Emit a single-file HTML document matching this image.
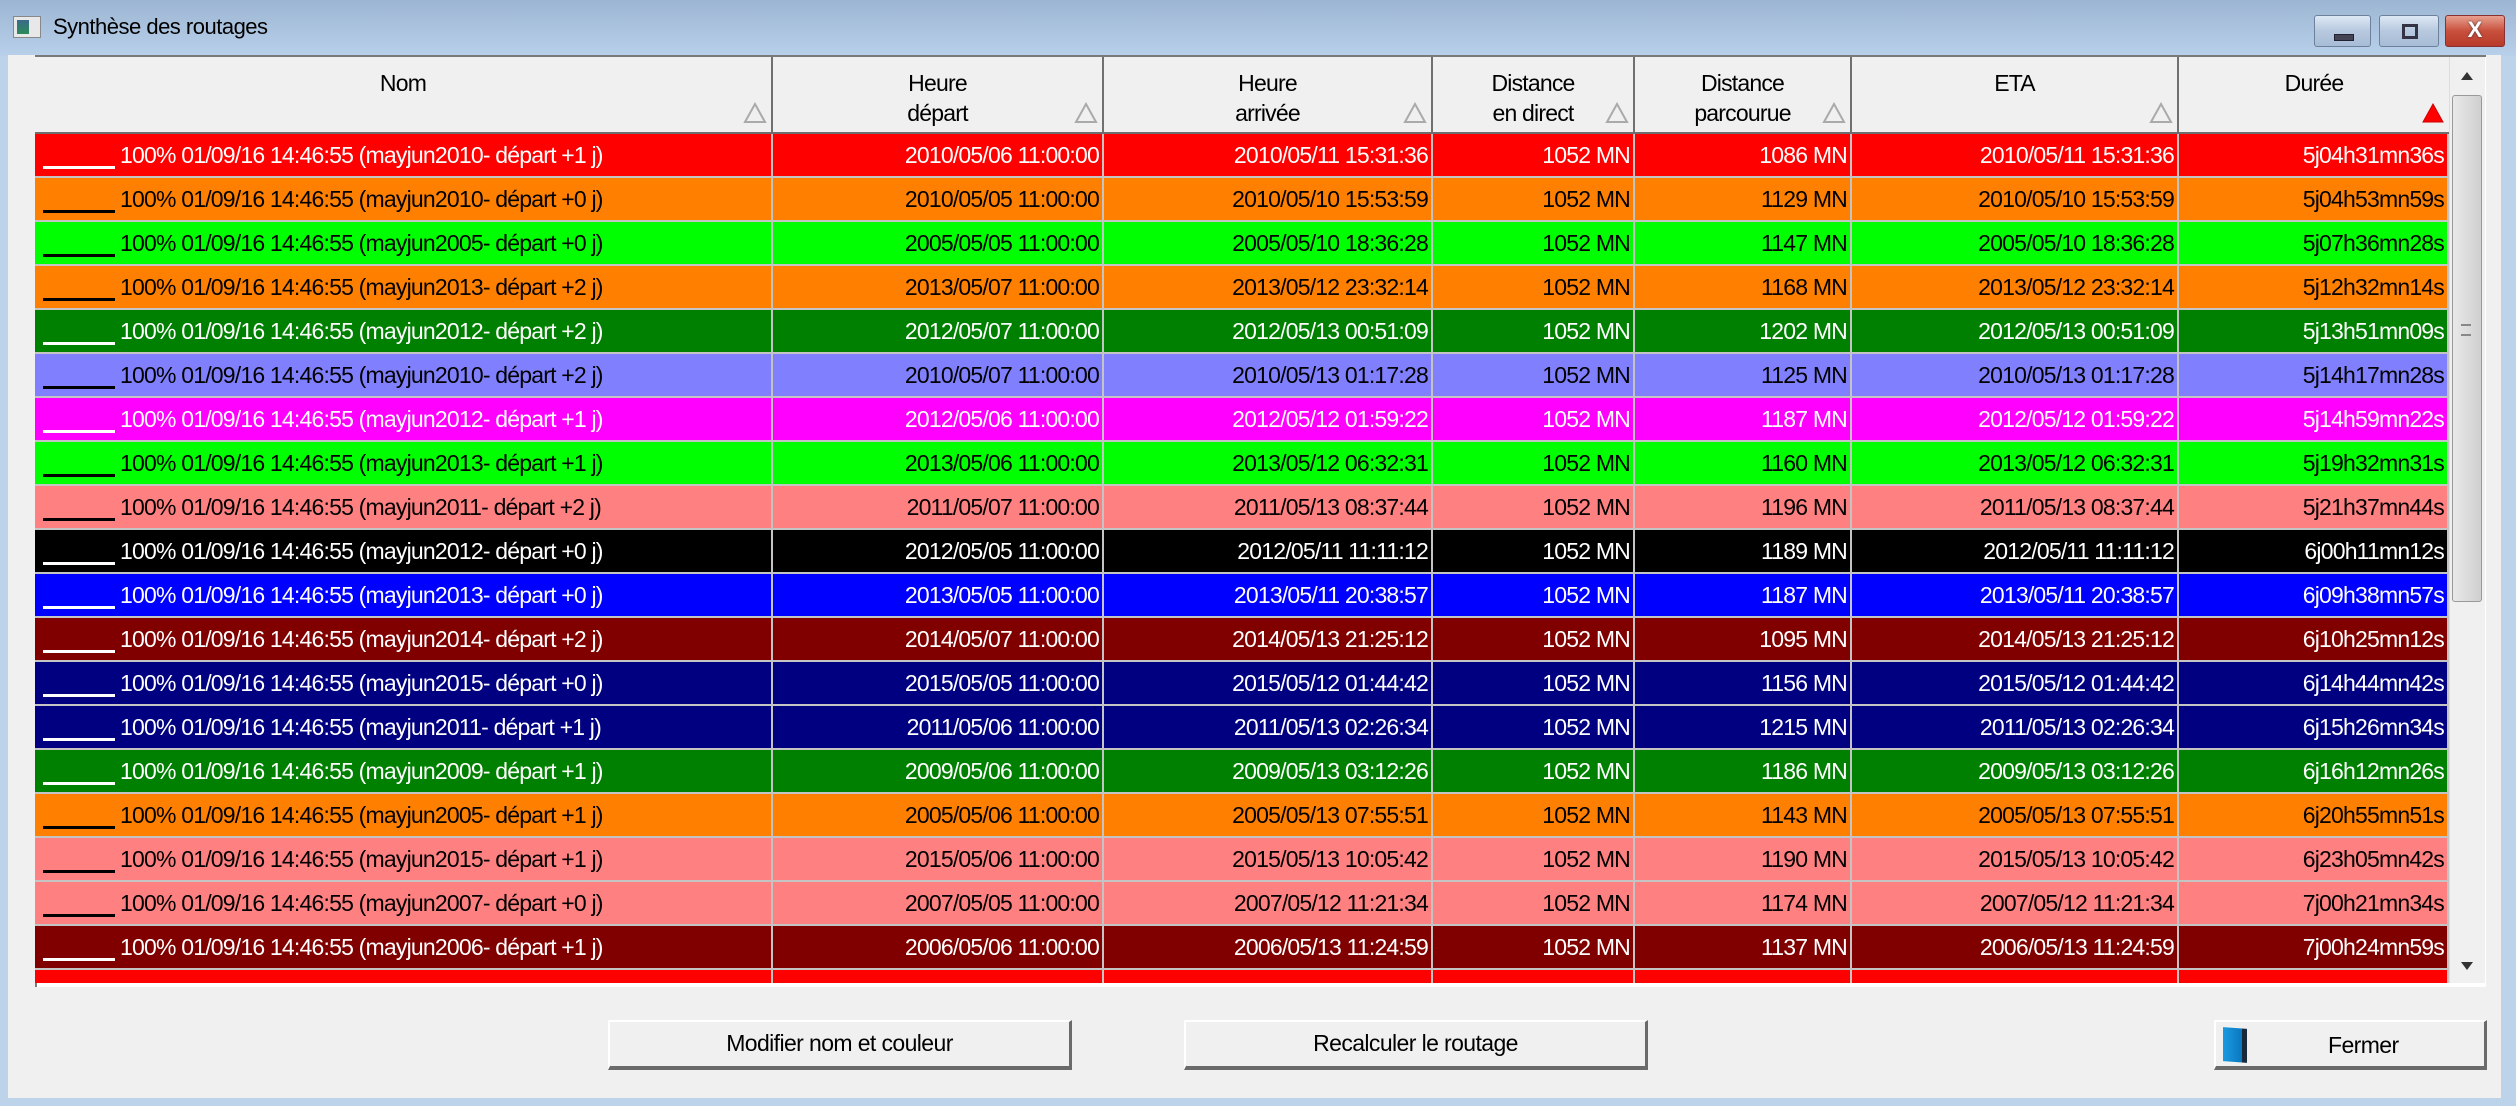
<!DOCTYPE html>
<html><head><meta charset="utf-8"><style>
*{margin:0;padding:0;box-sizing:border-box}
body{width:2516px;height:1106px;overflow:hidden;background:#bcd3ea;font-family:"Liberation Sans",Arial,sans-serif;position:relative}
.titlebar{position:absolute;left:0;top:0;width:2516px;height:56px;background:linear-gradient(#9cb5d2,#b8d0ea)}
.title{position:absolute;left:53px;top:14px;font-size:22px;color:#000;letter-spacing:-0.5px}
.ticon{position:absolute;left:13px;top:16px;width:28px;height:22px;background:#e8e8e8;border:1px solid #888}
.ticon:before{content:"";position:absolute;left:3px;top:3px;width:12px;height:14px;background:linear-gradient(#3a6b8a,#2c8a5a)}
.tb{position:absolute;top:15px;height:32px;border:1px solid #6d819c;border-radius:3px;background:linear-gradient(#dde8f4,#b7c9df 50%,#a7bcd6)}
.client{position:absolute;left:8px;top:55px;width:2493px;height:1043px;background:#f0f0f0}
.table{position:absolute;left:35px;top:55px;width:2451px;height:932px;background:#fff;border-top:2px solid #7a7a7a;border-left:2px solid #7a7a7a}
.hdr{position:absolute;left:35px;top:57px;height:77px;display:grid;grid-template-columns:738px 331px 329px 202px 217px 327px 270px;border-bottom:2px solid #6e6e6e}
.hdr div{background:#f0f0f0;border-right:2px solid #707070;position:relative;text-align:center;font-size:23px;letter-spacing:-0.8px;line-height:30px;padding-top:11px;color:#000}
.hdr div svg{position:absolute;right:4px;bottom:8px}
.row{position:absolute;left:35px;height:42px;display:grid;grid-template-columns:738px 331px 329px 202px 217px 327px 270px}
.row div{border-right:2px solid #c4c4c4;text-align:right;padding-right:3px;font-size:23px;letter-spacing:-0.8px;line-height:42px;white-space:nowrap;overflow:hidden}
.row div.n{text-align:left;padding-left:85px;position:relative}
.row div.n:before{content:"";position:absolute;left:8px;top:32px;width:72px;height:3px;background:currentColor}
.sep{position:absolute;left:35px;width:2414px;height:2px;background:#c4c4c4}
.W{color:#fff}.B{color:#000}
.sb{position:absolute;left:2449px;top:57px;width:36px;height:926px;background:#f0f0f0;border-left:1px solid #ddd}
.thumb{position:absolute;left:2452px;top:95px;width:30px;height:507px;border:1px solid #999;border-radius:3px;background:linear-gradient(90deg,#e9e9e9,#dcdcdc 50%,#cfcfcf)}
.btn{position:absolute;top:1020px;height:50px;background:#f0f0f0;border-top:2px solid #fff;border-left:2px solid #fff;border-right:3px solid #6a6a6a;border-bottom:4px solid #6a6a6a;font-size:23px;letter-spacing:-0.6px;text-align:center;line-height:42px;color:#000}
</style></head><body>
<div class="titlebar"></div>
<div class="ticon"></div>
<div class="title">Synthèse des routages</div>
<div class="tb" style="left:2314px;width:57px"><div style="position:absolute;left:19px;top:18px;width:20px;height:7px;background:#445;border:1px solid #223"></div></div>
<div class="tb" style="left:2379px;width:60px"><div style="position:absolute;left:22px;top:8px;width:16px;height:15px;border:3px solid #334"></div></div>
<div class="tb" style="left:2445px;width:60px;border-color:#8a3030;background:linear-gradient(#e8a090,#c8503c 50%,#b83a2a)"><div style="position:absolute;left:0;top:1px;width:58px;text-align:center;color:#fff;font-weight:bold;font-size:22px;text-shadow:0 0 2px #333">X</div></div>
<div class="client"></div>
<div class="table"></div>
<div class="hdr">
<div>Nom<svg width="24" height="22"><path d="M12 2 L22 20 L2 20 Z" fill="none" stroke="#aaa" stroke-width="2"/></svg></div>
<div>Heure<br>départ<svg width="24" height="22"><path d="M12 2 L22 20 L2 20 Z" fill="none" stroke="#aaa" stroke-width="2"/></svg></div>
<div>Heure<br>arrivée<svg width="24" height="22"><path d="M12 2 L22 20 L2 20 Z" fill="none" stroke="#aaa" stroke-width="2"/></svg></div>
<div>Distance<br>en direct<svg width="24" height="22"><path d="M12 2 L22 20 L2 20 Z" fill="none" stroke="#aaa" stroke-width="2"/></svg></div>
<div>Distance<br>parcourue<svg width="24" height="22"><path d="M12 2 L22 20 L2 20 Z" fill="none" stroke="#aaa" stroke-width="2"/></svg></div>
<div>ETA<svg width="24" height="22"><path d="M12 2 L22 20 L2 20 Z" fill="none" stroke="#aaa" stroke-width="2"/></svg></div>
<div style="border-right:none">Durée<svg width="24" height="22"><path d="M12 2 L22 20 L2 20 Z" fill="#f00" stroke="#c00" stroke-width="1"/></svg></div>
</div>

<div class="row W" style="top:134px;background:#ff0000"><div class="n">100% 01/09/16 14:46:55 (mayjun2010- départ +1 j)</div><div>2010/05/06 11:00:00</div><div>2010/05/11 15:31:36</div><div>1052 MN</div><div>1086 MN</div><div>2010/05/11 15:31:36</div><div>5j04h31mn36s</div></div>
<div class="row B" style="top:178px;background:#ff8000"><div class="n">100% 01/09/16 14:46:55 (mayjun2010- départ +0 j)</div><div>2010/05/05 11:00:00</div><div>2010/05/10 15:53:59</div><div>1052 MN</div><div>1129 MN</div><div>2010/05/10 15:53:59</div><div>5j04h53mn59s</div></div>
<div class="row B" style="top:222px;background:#00ff00"><div class="n">100% 01/09/16 14:46:55 (mayjun2005- départ +0 j)</div><div>2005/05/05 11:00:00</div><div>2005/05/10 18:36:28</div><div>1052 MN</div><div>1147 MN</div><div>2005/05/10 18:36:28</div><div>5j07h36mn28s</div></div>
<div class="row B" style="top:266px;background:#ff8000"><div class="n">100% 01/09/16 14:46:55 (mayjun2013- départ +2 j)</div><div>2013/05/07 11:00:00</div><div>2013/05/12 23:32:14</div><div>1052 MN</div><div>1168 MN</div><div>2013/05/12 23:32:14</div><div>5j12h32mn14s</div></div>
<div class="row W" style="top:310px;background:#008000"><div class="n">100% 01/09/16 14:46:55 (mayjun2012- départ +2 j)</div><div>2012/05/07 11:00:00</div><div>2012/05/13 00:51:09</div><div>1052 MN</div><div>1202 MN</div><div>2012/05/13 00:51:09</div><div>5j13h51mn09s</div></div>
<div class="row B" style="top:354px;background:#8080ff"><div class="n">100% 01/09/16 14:46:55 (mayjun2010- départ +2 j)</div><div>2010/05/07 11:00:00</div><div>2010/05/13 01:17:28</div><div>1052 MN</div><div>1125 MN</div><div>2010/05/13 01:17:28</div><div>5j14h17mn28s</div></div>
<div class="row W" style="top:398px;background:#ff00ff"><div class="n">100% 01/09/16 14:46:55 (mayjun2012- départ +1 j)</div><div>2012/05/06 11:00:00</div><div>2012/05/12 01:59:22</div><div>1052 MN</div><div>1187 MN</div><div>2012/05/12 01:59:22</div><div>5j14h59mn22s</div></div>
<div class="row B" style="top:442px;background:#00ff00"><div class="n">100% 01/09/16 14:46:55 (mayjun2013- départ +1 j)</div><div>2013/05/06 11:00:00</div><div>2013/05/12 06:32:31</div><div>1052 MN</div><div>1160 MN</div><div>2013/05/12 06:32:31</div><div>5j19h32mn31s</div></div>
<div class="row B" style="top:486px;background:#ff8080"><div class="n">100% 01/09/16 14:46:55 (mayjun2011- départ +2 j)</div><div>2011/05/07 11:00:00</div><div>2011/05/13 08:37:44</div><div>1052 MN</div><div>1196 MN</div><div>2011/05/13 08:37:44</div><div>5j21h37mn44s</div></div>
<div class="row W" style="top:530px;background:#000000"><div class="n">100% 01/09/16 14:46:55 (mayjun2012- départ +0 j)</div><div>2012/05/05 11:00:00</div><div>2012/05/11 11:11:12</div><div>1052 MN</div><div>1189 MN</div><div>2012/05/11 11:11:12</div><div>6j00h11mn12s</div></div>
<div class="row W" style="top:574px;background:#0000ff"><div class="n">100% 01/09/16 14:46:55 (mayjun2013- départ +0 j)</div><div>2013/05/05 11:00:00</div><div>2013/05/11 20:38:57</div><div>1052 MN</div><div>1187 MN</div><div>2013/05/11 20:38:57</div><div>6j09h38mn57s</div></div>
<div class="row W" style="top:618px;background:#800000"><div class="n">100% 01/09/16 14:46:55 (mayjun2014- départ +2 j)</div><div>2014/05/07 11:00:00</div><div>2014/05/13 21:25:12</div><div>1052 MN</div><div>1095 MN</div><div>2014/05/13 21:25:12</div><div>6j10h25mn12s</div></div>
<div class="row W" style="top:662px;background:#000080"><div class="n">100% 01/09/16 14:46:55 (mayjun2015- départ +0 j)</div><div>2015/05/05 11:00:00</div><div>2015/05/12 01:44:42</div><div>1052 MN</div><div>1156 MN</div><div>2015/05/12 01:44:42</div><div>6j14h44mn42s</div></div>
<div class="row W" style="top:706px;background:#000080"><div class="n">100% 01/09/16 14:46:55 (mayjun2011- départ +1 j)</div><div>2011/05/06 11:00:00</div><div>2011/05/13 02:26:34</div><div>1052 MN</div><div>1215 MN</div><div>2011/05/13 02:26:34</div><div>6j15h26mn34s</div></div>
<div class="row W" style="top:750px;background:#008000"><div class="n">100% 01/09/16 14:46:55 (mayjun2009- départ +1 j)</div><div>2009/05/06 11:00:00</div><div>2009/05/13 03:12:26</div><div>1052 MN</div><div>1186 MN</div><div>2009/05/13 03:12:26</div><div>6j16h12mn26s</div></div>
<div class="row B" style="top:794px;background:#ff8000"><div class="n">100% 01/09/16 14:46:55 (mayjun2005- départ +1 j)</div><div>2005/05/06 11:00:00</div><div>2005/05/13 07:55:51</div><div>1052 MN</div><div>1143 MN</div><div>2005/05/13 07:55:51</div><div>6j20h55mn51s</div></div>
<div class="row B" style="top:838px;background:#ff8080"><div class="n">100% 01/09/16 14:46:55 (mayjun2015- départ +1 j)</div><div>2015/05/06 11:00:00</div><div>2015/05/13 10:05:42</div><div>1052 MN</div><div>1190 MN</div><div>2015/05/13 10:05:42</div><div>6j23h05mn42s</div></div>
<div class="row B" style="top:882px;background:#ff8080"><div class="n">100% 01/09/16 14:46:55 (mayjun2007- départ +0 j)</div><div>2007/05/05 11:00:00</div><div>2007/05/12 11:21:34</div><div>1052 MN</div><div>1174 MN</div><div>2007/05/12 11:21:34</div><div>7j00h21mn34s</div></div>
<div class="row W" style="top:926px;background:#800000"><div class="n">100% 01/09/16 14:46:55 (mayjun2006- départ +1 j)</div><div>2006/05/06 11:00:00</div><div>2006/05/13 11:24:59</div><div>1052 MN</div><div>1137 MN</div><div>2006/05/13 11:24:59</div><div>7j00h24mn59s</div></div>
<div class="row W" style="top:970px;height:13px;background:#ff0000"><div></div><div></div><div></div><div></div><div></div><div></div><div></div></div>

<div class="sep" style="top:176px"></div><div class="sep" style="top:220px"></div><div class="sep" style="top:264px"></div><div class="sep" style="top:308px"></div><div class="sep" style="top:352px"></div><div class="sep" style="top:396px"></div><div class="sep" style="top:440px"></div><div class="sep" style="top:484px"></div><div class="sep" style="top:528px"></div><div class="sep" style="top:572px"></div><div class="sep" style="top:616px"></div><div class="sep" style="top:660px"></div><div class="sep" style="top:704px"></div><div class="sep" style="top:748px"></div><div class="sep" style="top:792px"></div><div class="sep" style="top:836px"></div><div class="sep" style="top:880px"></div><div class="sep" style="top:924px"></div><div class="sep" style="top:968px"></div>

<div class="sb"></div>
<svg style="position:absolute;left:2459px;top:70px" width="16" height="12"><path d="M8 2 L14 10 L2 10 Z" fill="#333"/></svg>
<div class="thumb"></div>
<div style="position:absolute;left:2461px;top:324px;width:10px;height:12px;border-top:2px solid #888;border-bottom:2px solid #888"></div>
<svg style="position:absolute;left:2459px;top:960px" width="16" height="12"><path d="M2 2 L14 2 L8 10 Z" fill="#333"/></svg>

<div class="btn" style="left:608px;width:464px">Modifier nom et couleur</div>
<div class="btn" style="left:1184px;width:464px">Recalculer le routage</div>
<div class="btn" style="left:2214px;width:273px"><span style="position:absolute;left:7px;top:6px;width:24px;height:34px;background:linear-gradient(90deg,#1a9ae0,#0a78c0);border-right:5px solid #1a2a3a;transform:skewY(4deg)"></span><span style="position:absolute;left:112px;top:2px">Fermer</span></div>
</body></html>
